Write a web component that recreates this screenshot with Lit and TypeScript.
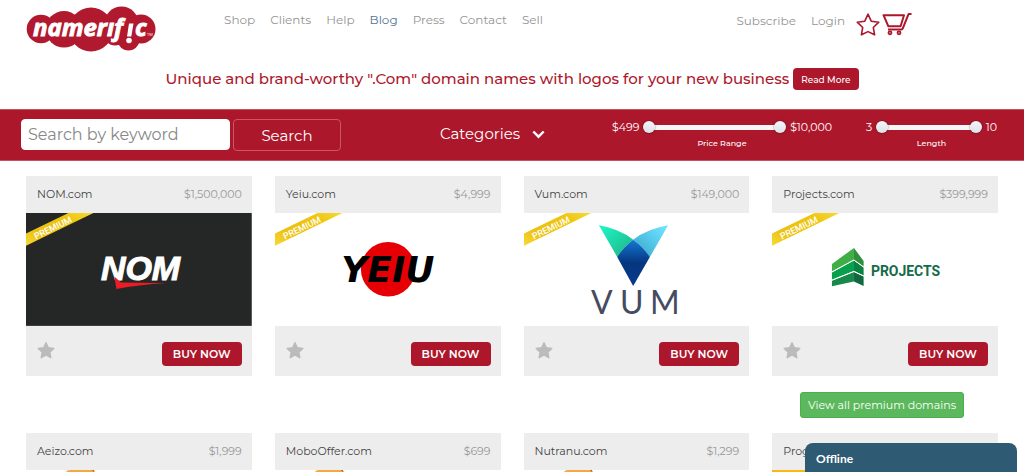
import { LitElement, html, svg, css } from "lit";
import { customElement, property, state } from "lit/decorators.js";

interface Domain {
  name: string;
  price: string;
  art: string;
  premium?: boolean;
}

const FONT = css`"Montserrat", "Inter", "Open Sans", sans-serif`;

const NAV = ["Shop", "Clients", "Help", "Blog", "Press", "Contact", "Sell"];

const PREMIUM: Domain[] = [
  { name: "NOM.com", price: "$1,500,000", art: "nom", premium: true },
  { name: "Yeiu.com", price: "$4,999", art: "yeiu", premium: true },
  { name: "Vum.com", price: "$149,000", art: "vum", premium: true },
  { name: "Projects.com", price: "$399,999", art: "projects", premium: true },
];

const LATEST: Domain[] = [
  { name: "Aeizo.com", price: "$1,999", art: "tab" },
  { name: "MoboOffer.com", price: "$699", art: "tab" },
  { name: "Nutranu.com", price: "$1,299", art: "tab" },
  { name: "Progenda.com", price: "$1,499", art: "gold" },
];

const ART: Record<string, unknown> = {
  nom: svg`
    <rect width="226" height="113" fill="#252726"></rect>
    <text class="nom" x="75" y="67">NOM</text>
    <path d="M88.5 63.5 L95 69.5 L141 70 Q112 72 90.5 76 Z" fill="#ec1c24"></path>`,
  yeiu: svg`
    <circle cx="113.3" cy="56.3" r="27.3" fill="#e60005"></circle>
    <text class="yeiu" x="113" y="69">YEIU</text>`,
  vum: svg`
    <defs>
      <linearGradient id="vg" x1="0" y1="0" x2="1" y2="1">
        <stop offset="0.1" stop-color="#1ff0c4"></stop><stop offset="0.95" stop-color="#1fb583"></stop>
      </linearGradient>
      <linearGradient id="vc" x1="1" y1="0" x2="0" y2="1">
        <stop offset="0.1" stop-color="#6fe0ff"></stop><stop offset="0.95" stop-color="#35a9cc"></stop>
      </linearGradient>
      <linearGradient id="vb" x1="0" y1="0" x2="0" y2="1">
        <stop offset="0" stop-color="#1479d4"></stop><stop offset="0.5" stop-color="#06367f"></stop>
        <stop offset="1" stop-color="#053a8a"></stop>
      </linearGradient>
    </defs>
    <path d="M75 12.3 Q95 15.5 109.3 26.7 Q99 34.5 93.3 44 Z" fill="url(#vg)"></path>
    <path d="M144.3 12.3 Q124 15.5 109.3 26.7 Q120 34.5 126 44 Z" fill="url(#vc)"></path>
    <path d="M109.3 26.7 Q120 34.5 126 44 L109.3 73 L93.3 44 Q99 34.5 109.3 26.7 Z" fill="url(#vb)"></path>
    <g class="vum">
      <text x="78" y="101">V</text><text x="108" y="101">U</text><text x="141" y="101">M</text>
    </g>`,
  projects: svg`
    <path d="M60 51 L82 35 V47 L60 58.5 Z" fill="#40ad45"></path>
    <path d="M82 35 L91.7 48 V53.5 L82 47 Z" fill="#2f8f3a"></path>
    <path d="M60 59.5 L82 47.5 V58 L60 66.7 Z" fill="#07a04c"></path>
    <path d="M82 47.5 L91.7 54.5 V62.5 L82 58 Z" fill="#0a8241"></path>
    <path d="M60 67.7 L82 59 V68.5 L60 73.3 Z" fill="#178a4b"></path>
    <path d="M82 59 L91.7 63.5 V73 L82 68.5 Z" fill="#10693f"></path>
    <path d="M60 59 L82 47 L91.7 54 M60 67.2 L82 58.5 L91.7 63" fill="none" stroke="#fff" stroke-width="1"></path>
    <text class="projects" x="99" y="63">PROJECTS</text>`,
  tab: svg`<path d="M40 2 Q41 0 44 0 H68 L69 6 L66 12 H40 Z" fill="#f5a742"></path><path d="M66 0 H68 L69 3 Z" fill="#a8662a"></path>`,
  gold: svg`<rect width="226" height="113" fill="#f9b90f"></rect>`,
};

const RIBBON = svg`
  <defs>
    <linearGradient id="rb" x1="0" y1="1" x2="1" y2="0">
      <stop offset="0" stop-color="#f7d935"></stop><stop offset="0.3" stop-color="#ecc112"></stop>
      <stop offset="0.7" stop-color="#eec40c"></stop><stop offset="1" stop-color="#f5da35"></stop>
    </linearGradient>
  </defs>
  <path d="M0 20.5 L42.5 0 H67.5 L0 32.7 Z" fill="url(#rb)"></path>
  <text class="ribbon" x="27" y="18" transform="rotate(-26 27 15)">PREMIUM</text>`;

@customElement("domain-card")
export class DomainCard extends LitElement {
  @property({ attribute: false }) domain!: Domain;
  @state() private saved = false;

  static styles = css`
    :host { display: block; font-family: ${FONT}; background: #ededed; }
    .head, .foot { display: flex; justify-content: space-between; padding: 0 10px 0 11px; }
    .head { align-items: flex-start; padding-top: 10px; padding-bottom: 11px; font-size: 11px; line-height: 16px; }
    .name { color: #444; text-decoration: none; }
    .price { color: #999; }
    .art { display: block; width: 100%; aspect-ratio: 2 / 1; background: #fff; }
    .foot { align-items: flex-start; padding-top: 16px; padding-bottom: 10px; }
    .star { display: block; border: 0; padding: 0; background: none; color: #bbb; cursor: pointer; }
    .star.saved { color: #ad172b; }
    .star svg { display: block; }
    .buy {
      height: 24px; min-width: 80px; padding: 0 10px; border: 0; border-radius: 4px; background: #ad172b; color: #fff;
      font-family: inherit; font-size: 11px; font-weight: 600; line-height: 24px; cursor: pointer;
    }
    .nom { font: italic 700 34px "Liberation Sans", sans-serif; fill: #fff; stroke: #fff; stroke-width: 1; }
    .yeiu { font: italic 700 36px "DejaVu Sans", sans-serif; text-anchor: middle; }
    .vum { font: 400 32px "Lato", sans-serif; fill: #454b60; text-anchor: middle; }
    .projects { font: 700 14px "Roboto", sans-serif; fill: #156b48; }
    .ribbon { font: 500 9px "Roboto", sans-serif; fill: #fff; text-anchor: middle; }
  `;

  render() {
    const d = this.domain;
    return html`
      <div class="head"><a class="name" href="#">${d.name}</a><span class="price">${d.price}</span></div>
      <svg class="art" viewBox="0 0 226 113" role="img" aria-label=${d.name}>
        ${ART[d.art]}${d.premium ? RIBBON : ""}
      </svg>
      <div class="foot">
        <button class="star ${this.saved ? "saved" : ""}" aria-label="Save ${d.name}" @click=${() => (this.saved = !this.saved)}>
          <svg width="18" height="18" viewBox="0 0 18 18">
            <path d="M9 0.7 L11.3 5.7 L16.8 6.4 L12.8 10.2 L13.8 15.7 L9 13 L4.2 15.7 L5.2 10.2 L1.2 6.4 L6.7 5.7 Z" fill="currentColor" stroke="currentColor" stroke-linejoin="round" stroke-width="1.4"></path>
          </svg>
        </button>
        <button class="buy">BUY NOW</button>
      </div>`;
  }
}

@customElement("range-pair")
export class RangePair extends LitElement {
  @property() label = "";
  @property() prefix = "";
  @property({ type: Number }) min = 0;
  @property({ type: Number }) max = 100;
  @state() private low?: number;
  @state() private high?: number;

  static styles = css`
    :host { display: block; color: #fff; font-family: ${FONT}; }
    .row { display: flex; align-items: center; gap: 4px; height: 16px; font-size: 11px; }
    .track {
      flex: 1; min-width: 0; display: grid; align-items: center;
      background: linear-gradient(#f7f7f7, #f7f7f7) center / calc(100% - 12px) 5px no-repeat;
    }
    input {
      grid-area: 1 / 1; appearance: none; width: 100%; height: 13px; margin: 0;
      background: none; pointer-events: none;
    }
    input::-webkit-slider-thumb {
      appearance: none; width: 12px; height: 12px; border-radius: 50%; pointer-events: auto; cursor: pointer;
      background: linear-gradient(#f3f6f9, #dde2e8); box-shadow: 0 0 2px rgba(0, 0, 0, 0.6);
    }
    .label { margin-top: 2px; text-align: center; font-size: 8px; line-height: 12px; font-weight: 500; }
  `;

  render() {
    const low = this.low ?? this.min;
    const high = this.high ?? this.max;
    const fmt = (n: number) => this.prefix + n.toLocaleString("en-US");
    return html`
      <div class="row">
        <span>${fmt(low)}</span>
        <div class="track">
          <input type="range" aria-label="Minimum ${this.label}" min=${this.min} max=${this.max} .value=${String(low)}
            @input=${(e: Event) => (this.low = Math.min(+(e.target as HTMLInputElement).value, high))} />
          <input type="range" aria-label="Maximum ${this.label}" min=${this.min} max=${this.max} .value=${String(high)}
            @input=${(e: Event) => (this.high = Math.max(+(e.target as HTMLInputElement).value, low))} />
        </div>
        <span>${fmt(high)}</span>
      </div>
      <div class="label">${this.label}</div>`;
  }
}

@customElement("app-root")
export class AppRoot extends LitElement {
  static styles = css`
    :host { display: block; background: #fff; font-family: ${FONT}; }
    * { box-sizing: border-box; }
    button, input { font-family: inherit; }
    a { text-decoration: none; }
    .header { display: flex; align-items: flex-start; padding: 6px 112px 0 26px; height: 64px; }
    .logo { display: block; margin-right: 68px; }
    .logo svg, .icon svg { display: block; }
    .wordmark { font: italic 700 24px "Open Sans", sans-serif; fill: #fff; stroke: #fff; stroke-width: 0.9; }
    .tm { font: 400 4px "Open Sans", sans-serif; fill: #fff; }
    .nav, .account { display: flex; font-size: 12px; line-height: 16px; }
    .nav { gap: 15px; padding-top: 6px; flex: 1; }
    .account { gap: 15px; padding-top: 7px; align-items: flex-start; }
    .nav a, .account a { color: #949494; }
    .nav .current { color: #4f7290; }
    .icons { display: flex; gap: 2px; margin-left: -4px; }
    .tagline { display: flex; justify-content: center; align-items: center; gap: 4px; height: 45px; padding-bottom: 15px; }
    .tagline h1 { margin: 0; padding-bottom: 2px; color: #ad172b; font-size: 15px; font-weight: 500; }
    .more {
      height: 22px; padding: 0 8px; border: 0; border-radius: 4px; background: #ad172b; color: #fff;
      font-size: 9px; font-weight: 500; cursor: pointer;
    }
    .bar {
      display: flex; align-items: flex-start; padding: 9px 27px 0 21px; height: 52px;
      background: #ad172b; border: solid #c25361; border-width: 1px 0; color: #fff;
    }
    .search { display: flex; gap: 3px; width: 320px; }
    .search input {
      flex: 1; min-width: 0; height: 31px; padding: 0 6px; border: 1px solid #fff; border-radius: 4px;
      background: #fff; font-size: 16px; color: #444;
    }
    .search input::placeholder { color: #888; }
    .search button {
      width: 108px; height: 32px; border: 1px solid #c9566a; border-radius: 4px; background: none;
      color: #fff; font-size: 15px; cursor: pointer;
    }
    .categories { flex: 1; padding: 3px 0 0 32px; text-align: center; }
    .categories button {
      display: inline-flex; align-items: center; gap: 12px; padding: 0; border: 0; background: none;
      color: #fff; font-size: 15px; line-height: 24px; cursor: pointer;
    }
    .ranges { display: flex; gap: 34px; }
    .price-range { width: 220px; }
    .length-range { width: 131px; }
    .grid { display: grid; grid-template-columns: repeat(4, 1fr); gap: 23px; padding: 0 26px; }
    .premium { padding-top: 15px; }
    .view-all { display: flex; justify-content: flex-end; padding: 16px 60px 15px; }
    .view-all a {
      height: 26px; padding: 0 7px; border: 1px solid #4cae4c; border-radius: 3px; background: #5cb85c;
      color: #fff; font-size: 11px; line-height: 24px;
    }
    .chat {
      position: fixed; right: 7px; bottom: 0; width: 212px; height: 29px; padding: 2px 11px 0; border: 0;
      border-radius: 8px 8px 0 0; background: #2e5a74; color: #fff; text-align: left;
      font: 700 12px "Lato", sans-serif; cursor: pointer;
    }
  `;

  render() {
    return html`
      <header class="header">
        <a class="logo" href="#" aria-label="Namerific home">
          <svg width="130" height="46" viewBox="26 6 130 46">
            <g fill="#b0192e">
              <circle cx="41" cy="29" r="14.3"></circle>
              <circle cx="64" cy="29.3" r="18.3"></circle>
              <circle cx="91" cy="29.5" r="22"></circle>
              <circle cx="121.5" cy="23.5" r="17"></circle>
              <circle cx="141" cy="29" r="14.5"></circle>
              <circle cx="115" cy="34.5" r="11"></circle>
              <circle cx="128.5" cy="39.5" r="11"></circle>
            </g>
            <text class="wordmark" x="33" y="36">namerıf</text>
            <path d="M129 23.5 H133.5 L131.3 36.5 H127 Z" fill="#fff"></path>
            <circle cx="129" cy="40.5" r="2.8" fill="#fff"></circle>
            <text class="wordmark" x="135" y="36">c</text>
            <text class="tm" x="147" y="36">TM</text>
          </svg>
        </a>
        <nav class="nav">
          ${NAV.map((n) => html`<a href="#" class=${n === "Blog" ? "current" : ""}>${n}</a>`)}
        </nav>
        <div class="account">
          <a href="#">Subscribe</a>
          <a href="#">Login</a>
          <div class="icons">
            <a class="icon" href="#" aria-label="Favourites">
              <svg width="24" height="24" viewBox="0 0 24 24">
                <path d="M12 1.2 L15.2 8.2 L22.8 9.2 L17.3 14.5 L18.6 21.8 L12 18.6 L5.4 21.8 L6.7 14.5 L1.2 9.2 L8.8 8.2 Z" fill="none" stroke="#ad172b" stroke-width="1.6" stroke-linejoin="round"></path>
              </svg>
            </a>
            <a class="icon" href="#" aria-label="Cart">
              <svg width="30" height="24" viewBox="0 0 30 24" fill="none" stroke="#ad172b">
                <path d="M1.5 2.2 H22 L18.6 13.3 H6.4 Z" stroke-width="2" stroke-linejoin="round"></path>
                <path d="M29.5 0.9 H27.3 Q26.5 0.9 26.2 1.8 L20.8 15.3 Q20.3 16.6 19 16.6 H6" stroke-width="2"></path>
                <circle cx="8" cy="19.8" r="1.5" stroke-width="1.8"></circle>
                <circle cx="17" cy="19.8" r="1.5" stroke-width="1.8"></circle>
              </svg>
            </a>
          </div>
        </div>
      </header>
      <section class="tagline">
        <h1>Unique and brand-worthy ".Com" domain names with logos for your new business</h1>
        <button class="more">Read More</button>
      </section>
      <section class="bar">
        <form class="search" @submit=${(e: Event) => e.preventDefault()}>
          <input type="text" aria-label="Search by keyword" placeholder="Search by keyword" />
          <button type="submit">Search</button>
        </form>
        <div class="categories">
          <button>
            Categories
            <svg width="13" height="9" viewBox="0 0 13 9"><path d="M1.3 1.5 L6.5 6.7 L11.7 1.5" fill="none" stroke="#fff" stroke-width="2.4"></path></svg>
          </button>
        </div>
        <div class="ranges">
          <range-pair class="price-range" label="Price Range" prefix="$" min="499" max="10000"></range-pair>
          <range-pair class="length-range" label="Length" min="3" max="10"></range-pair>
        </div>
      </section>
      <main>
        <div class="grid premium">
          ${PREMIUM.map((d) => html`<domain-card .domain=${d}></domain-card>`)}
        </div>
        <div class="view-all"><a href="#">View all premium domains</a></div>
        <div class="grid">
          ${LATEST.map((d) => html`<domain-card .domain=${d}></domain-card>`)}
        </div>
      </main>
      <button class="chat">Offline</button>`;
  }
}
